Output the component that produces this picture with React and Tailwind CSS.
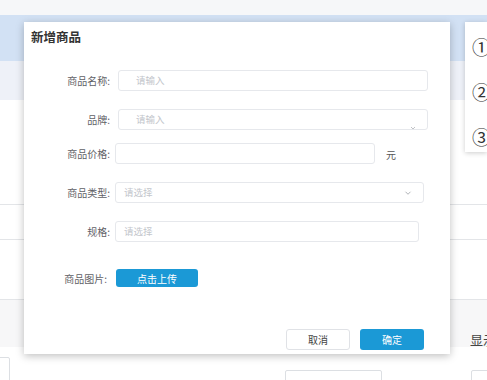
import React from 'react';

const FONT = "font-['Noto_Sans_CJK_SC','Noto_Sans',sans-serif]";

function Chevron({ className }) {
  return (
    <svg viewBox="0 0 12 12" className={className} fill="none" stroke="currentColor" strokeWidth="1.2">
      <path d="M3 4.5 6 7.5 9 4.5" />
    </svg>
  );
}

function Row({ label, top, left, width, children }) {
  return (
    <div className={`flex items-center h-[21px] ${top}`}>
      <div className="w-[88px] pr-[2px] text-right text-[10px] text-[#5f6166]">{label}</div>
      <div className={`${left} ${width} h-full`}>{children}</div>
    </div>
  );
}

function Field({ placeholder, select, pad = 'pl-[17px]' }) {
  return (
    <div className={`flex items-center justify-between h-full border border-[#e6e8ec] rounded-[3px] bg-white ${pad} pr-[10px]`}>
      <span className="text-[9.5px] text-[#c3c6cc]">{placeholder}</span>
      {select && <Chevron className="w-[10px] h-[10px] text-[#b0b3b8]" />}
    </div>
  );
}

export default function App() {
  return (
    <div className={`relative w-[487px] h-[380px] overflow-hidden bg-white ${FONT}`}>
      {/* page behind the dialog */}
      <div className="flex flex-col h-full">
        <div className="h-[15px] bg-[#f6f7f9]" />
        <div className="h-[46px] bg-[#d2e1f4]" />
        <div className="h-[39px] bg-[#eef1f8]" />
        <div className="h-[105px] border-b border-[#e3e5e8]" />
        <div className="h-[35px] border-b border-[#e3e5e8]" />
        <div className="h-[60px] border-b border-[#e3e5e8]" />
        <div className="h-[47px] bg-[#f7f7f8] flex items-start justify-end pt-[30px]">
          <span className="w-[17px] overflow-hidden whitespace-nowrap text-[13px] leading-[19px] text-[#444]">显示</span>
        </div>
        <div className="flex-1 relative">
          <div className="absolute left-[-4px] top-[10px] w-[14px] h-[30px] border border-[#dcdfe3] rounded-[2px]" />
          <div className="absolute left-[285px] top-[23px] w-[97px] h-[30px] border border-[#dcdfe3] rounded-[2px]" />
          <div className="absolute left-[471px] top-[23px] w-[40px] h-[30px] border border-[#dcdfe3] rounded-[2px]" />
        </div>
      </div>

      {/* step popover on the right */}
      <div className="absolute left-[465px] top-[22px] w-[22px] h-[130px] bg-white shadow-[0_1px_5px_rgba(0,0,0,0.2)] flex flex-col pl-[7px] pt-[15px] gap-[25px] text-[19px] leading-[20px] text-[#333]">
        <span>①</span>
        <span>②</span>
        <span>③</span>
      </div>

      {/* dialog */}
      <div className="absolute left-[24px] top-[22px] w-[426px] h-[332px] bg-white shadow-[0_2px_8px_rgba(0,0,0,0.25)] flex flex-col">
        <div className="h-[30px] flex items-center px-[7px] text-[12.5px] font-bold text-[#333]">新增商品</div>

        <Row label="商品名称:" top="mt-[18px]" left="ml-[6px]" width="w-[310px]">
          <Field placeholder="请输入" />
        </Row>
        <div className="relative">
          <Row label="品牌:" top="mt-[18px]" left="ml-[6px]" width="w-[310px]">
            <Field placeholder="请输入" />
          </Row>
          <Chevron className="absolute left-[385px] top-[33px] w-[8px] h-[8px] text-[#b0b3b8]" />
        </div>
        <div className="flex items-center">
          <Row label="商品价格:" top="mt-[13px]" left="ml-[3px]" width="w-[260px]">
            <Field placeholder="" />
          </Row>
          <span className="mt-[15px] ml-[11px] text-[10px] text-[#555]">元</span>
        </div>
        <Row label="商品类型:" top="mt-[18px]" left="ml-[3px]" width="w-[309px]">
          <Field placeholder="请选择" select pad="pl-[8px]" />
        </Row>
        <Row label="规格:" top="mt-[18px]" left="ml-[3px]" width="w-[304px]">
          <Field placeholder="请选择" pad="pl-[8px]" />
        </Row>

        <div className="flex items-center h-[18px] mt-[27px]">
          <div className="w-[88px] pr-[5px] text-right text-[10px] text-[#5f6166]">商品图片:</div>
          <button className="ml-[4px] w-[82px] h-full rounded-[3px] bg-[#1b99d6] text-white text-[10px]">点击上传</button>
        </div>

        <div className="mt-auto mb-[4px] mr-[26px] flex justify-end gap-[10px]">
          <button className="w-[64px] h-[21px] rounded-[3px] border border-[#e0e2e6] bg-white text-[10px] text-[#444]">取消</button>
          <button className="w-[64px] h-[21px] rounded-[3px] bg-[#1b99d6] text-white text-[10px]">确定</button>
        </div>
      </div>
    </div>
  );
}
